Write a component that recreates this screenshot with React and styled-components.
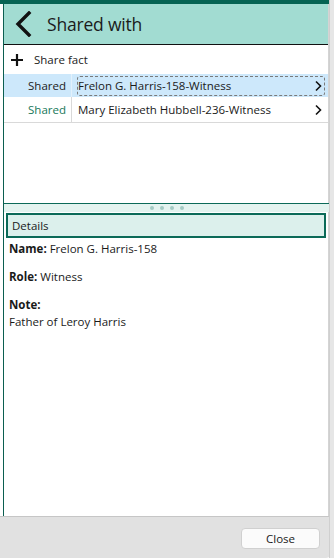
import React from "react";
import styled, { createGlobalStyle } from "styled-components";

const Global = createGlobalStyle`
  html, body { margin: 0; padding: 0; background: #ffffff; }
  body { font-family: "Open Sans", "Noto Sans", sans-serif; color: #1a1a1a; }
  #root { width: 334px; height: 558px; }
`;

const Frame = styled.div`
  width: 334px;
  height: 558px;
  display: flex;
  background: #ffffff;
  overflow: hidden;
`;

const Window = styled.div`
  flex: 1;
  display: flex;
  flex-direction: column;
  min-width: 0;
`;

const RightGutter = styled.div`
  width: 4px;
  background: #e6e6e6;
  border-left: 1px solid #cfcfcf;
`;

const Main = styled.div`
  flex: 1;
  display: flex;
  flex-direction: column;
  margin-left: 3px;
  border-left: 1px solid #0b5e50;
  border-right: 1px solid #d4d4d4;
  min-height: 0;
`;

const TopStrip = styled.div`
  height: 4px;
  background: #066353;
  margin-left: -4px;
  margin-right: -1px;
`;

const Header = styled.div`
  height: 40px;
  background: #a2dcd2;
  border-bottom: 1px solid #111;
  display: flex;
  align-items: center;
  gap: 14px;
  padding-left: 9px;
`;

const Title = styled.div`
  font-family: "Open Sans", "Noto Sans", sans-serif;
  font-size: 17.5px;
  color: #1b1b1b;
  letter-spacing: -0.2px;
`;

const Toolbar = styled.div`
  height: 29px;
  display: flex;
  align-items: center;
  gap: 10px;
  padding-left: 6px;
  font-size: 11.5px;
`;

const List = styled.div`
  display: flex;
  flex-direction: column;
`;

const Row = styled.div`
  display: grid;
  grid-template-columns: 67px 1fr;
  height: ${(p) => (p.$selected ? "23px" : "25px")};
  background: ${(p) => (p.$selected ? "#cde8fb" : "#ffffff")};
  border-bottom: ${(p) => (p.$last ? "1px solid #d9d9d9" : "none")};
`;

const Label = styled.div`
  display: flex;
  align-items: center;
  justify-content: flex-end;
  padding-right: 5px;
  font-size: 11.5px;
  color: ${(p) => (p.$green ? "#17785a" : "#222")};
`;

const Cell = styled.div`
  position: relative;
  display: flex;
  align-items: center;
  justify-content: space-between;
  border-left: 1px solid ${(p) => (p.$selected ? "#e3f1fc" : "#d9d9d9")};
  padding: 0 6px 0 6px;
  font-size: 11.5px;
  color: #1a1a1a;
`;

const Focus = styled.div`
  position: absolute;
  left: 5px;
  right: 3px;
  top: 2px;
  bottom: 1px;
  border: 1px dashed #7a7a7a;
  border-radius: 3px;
  pointer-events: none;
`;

const Spacer = styled.div`
  flex: 0 0 80px;
`;

const Splitter = styled.div`
  height: 8px;
  border-top: 1px solid #0b6a58;
  background: #e3f3ef;
  display: flex;
  justify-content: center;
  align-items: center;
  gap: 6px;
  margin-right: -1px;
`;

const Dot = styled.span`
  width: 4px;
  height: 4px;
  border-radius: 50%;
  background: #a4ccc4;
`;

const DetailsHeader = styled.div`
  margin: 1px 2px 0 2px;
  height: 21px;
  border: 2px solid #0b6a58;
  background: #dcf0ec;
  display: flex;
  align-items: center;
  padding-left: 4px;
  font-size: 11.5px;
`;

const Details = styled.div`
  padding: 2px 5px 0 5px;
  display: flex;
  flex-direction: column;
  gap: 11px;
  font-size: 11.5px;
  line-height: 17px;
`;

const Field = styled.div``;

const Bold = styled.b`
  font-weight: 700;
`;

const Footer = styled.div`
  height: 41px;
  background: #e1e1e1;
  border-top: 1px solid #c6c6c6;
  display: flex;
  justify-content: flex-end;
  align-items: center;
  padding-right: 12px;
  border-bottom-right-radius: 6px;
  margin-right: -3px;
`;

const Button = styled.button`
  width: 79px;
  height: 21px;
  background: #fbfbfb;
  border: 1px solid #d0d0d0;
  border-radius: 4px;
  font-family: "Open Sans", "Noto Sans", sans-serif;
  font-size: 11.5px;
  color: #1a1a1a;
  padding: 0;
  margin-top: 1px;
`;

const Back = () => (
  <svg width="20" height="26" viewBox="0 0 20 26">
    <path d="M16 2 L5 13 L16 24" fill="none" stroke="#111" strokeWidth="3.4" strokeLinecap="square" />
  </svg>
);

const Plus = () => (
  <svg width="14" height="14" viewBox="0 0 14 14">
    <path d="M7 1 V13 M1 7 H13" stroke="#111" strokeWidth="2.2" />
  </svg>
);

const Chevron = () => (
  <svg width="8" height="12" viewBox="0 0 8 12">
    <path d="M2 1.5 L6.5 6 L2 10.5" fill="none" stroke="#111" strokeWidth="1.6" />
  </svg>
);

export default function App() {
  return (
    <>
      <Global />
      <Frame>
        <Window>
          <Main>
            <TopStrip />
            <Header>
              <Back />
              <Title>Shared with</Title>
            </Header>
            <Toolbar>
              <Plus />
              <span>Share fact</span>
            </Toolbar>
            <List>
              <Row $selected>
                <Label>Shared</Label>
                <Cell $selected>
                  <Focus />
                  <span>Frelon G. Harris-158-Witness</span>
                  <Chevron />
                </Cell>
              </Row>
              <Row $last>
                <Label $green>Shared</Label>
                <Cell>
                  <span>Mary Elizabeth Hubbell-236-Witness</span>
                  <Chevron />
                </Cell>
              </Row>
            </List>
            <Spacer />
            <Splitter>
              <Dot />
              <Dot />
              <Dot />
              <Dot />
            </Splitter>
            <DetailsHeader>Details</DetailsHeader>
            <Details>
              <Field>
                <Bold>Name:</Bold> Frelon G. Harris-158
              </Field>
              <Field>
                <Bold>Role:</Bold> Witness
              </Field>
              <Field>
                <Bold>Note:</Bold>
                <br />
                Father of Leroy Harris
              </Field>
            </Details>
            <div style={{ flex: 1 }} />
          </Main>
          <Footer>
            <Button>Close</Button>
          </Footer>
        </Window>
        <RightGutter />
      </Frame>
    </>
  );
}
